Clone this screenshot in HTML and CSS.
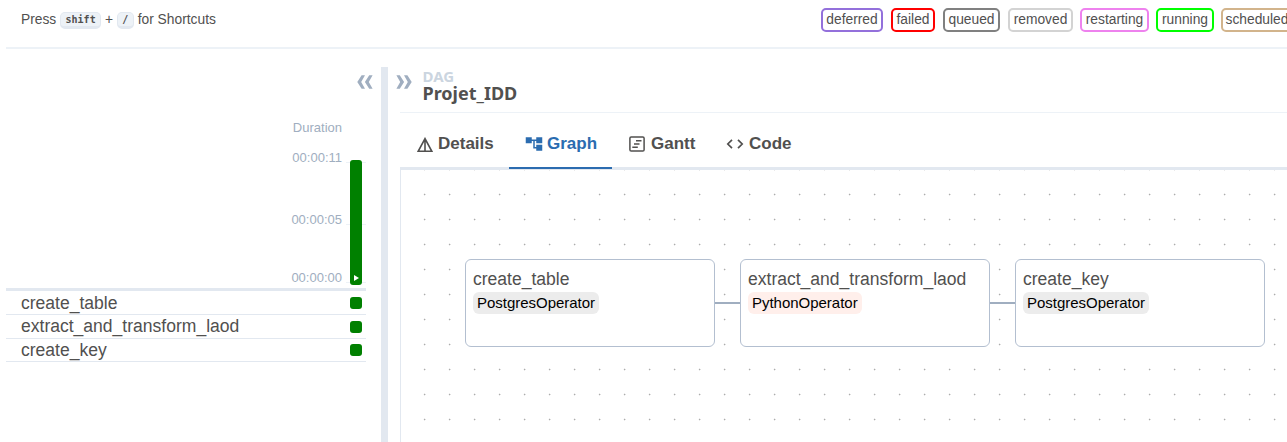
FILE: index.html
```html
<!DOCTYPE html>
<html lang="en">
<head>
<meta charset="utf-8">
<title>Projet_IDD</title>
<link rel="stylesheet" href="styles.css">
</head>
<body>
<header class="topbar">
  <div class="shortcuts">Press <kbd class="key-shift">shift</kbd> + <kbd class="key-slash">/</kbd> for Shortcuts</div>
  <div class="legend">
    <span class="chip deferred">deferred</span>
    <span class="chip failed">failed</span>
    <span class="chip queued">queued</span>
    <span class="chip removed">removed</span>
    <span class="chip restarting">restarting</span>
    <span class="chip running">running</span>
    <span class="chip scheduled">scheduled</span>
  </div>
</header>
<main class="main">
  <section class="grid">
    <div class="collapse">
      <svg width="16" height="14" viewBox="0 0 16 14"><path d="M8 .3H4.6L.3 7l4.3 6.7H8L4.2 7zM15.6.3h-3.4L7.9 7l4.3 6.7h3.4L11.8 7z"/></svg>
    </div>
    <div class="chart">
      <div class="axis">
        <span class="duration">Duration</span>
        <span class="tick-top">00:00:11</span>
        <span class="tick-mid">00:00:05</span>
        <span class="tick-low">00:00:00</span>
      </div>
      <div class="plot">
        <div class="bar"><svg width="5" height="6" viewBox="0 0 5 6"><path d="M0 0l5 3-5 3z"/></svg></div>
      </div>
    </div>
    <div class="task first"><span>create_table</span><i class="state"></i></div>
    <div class="task second"><span>extract_and_transform_laod</span><i class="state"></i></div>
    <div class="task third"><span>create_key</span><i class="state"></i></div>
  </section>
  <div class="divider"></div>
  <section class="details">
    <div class="heading">
      <svg class="expand" width="16" height="14" viewBox="0 0 16 14"><path d="M.4.3h3.4L8.1 7l-4.3 6.7H.4L4.2 7zM8 .3h3.4L15.7 7l-4.3 6.7H8L11.8 7z"/></svg>
      <div class="title"><span class="kind">DAG</span><span class="name">Projet_IDD</span></div>
    </div>
    <nav class="tabs">
      <div class="tab tab-details">
        <svg width="16" height="16" viewBox="0 0 16 16" fill="none" stroke="currentColor" stroke-width="1.6"><path d="M8 1.6L1.2 14.3h13.6zM8 2v12"/></svg>Details
      </div>
      <div class="tab tab-graph active">
        <svg width="18" height="18" viewBox="0 0 24 24" fill="currentColor"><path d="M23 11V3h-8v3H9V3H1v8h8V8h2v10h4v3h8v-8h-8v3h-2V8h2v3z"/></svg>Graph
      </div>
      <div class="tab tab-gantt">
        <svg width="16" height="16" viewBox="0 0 16 16" fill="none" stroke="currentColor" stroke-width="1.5"><rect x=".9" y=".9" width="14.2" height="14.2" rx="1.3"/><path d="M7 4.8h5.5M5 8h5.5M3.3 11.3h5.5"/></svg>Gantt
      </div>
      <div class="tab tab-code">
        <svg width="18" height="10" viewBox="0 0 18 10" fill="none" stroke="currentColor" stroke-width="1.7"><path d="M6 .8L1.8 5 6 9.2M12 .8L16.2 5 12 9.2"/></svg>Code
      </div>
    </nav>
    <div class="canvas">
      <div class="flow">
        <div class="node"><span class="node-name">create_table</span><span class="operator">PostgresOperator</span></div>
        <div class="edge"></div>
        <div class="node"><span class="node-name">extract_and_transform_laod</span><span class="operator python">PythonOperator</span></div>
        <div class="edge"></div>
        <div class="node"><span class="node-name">create_key</span><span class="operator">PostgresOperator</span></div>
      </div>
    </div>
  </section>
</main>
</body>
</html>
```
FILE: styles.css
```css
* { box-sizing: border-box; }
body {
  margin: 0;
  height: 442px;
  overflow: hidden;
  background: #fff;
  color: #51504f;
  font-family: "Liberation Sans", Arial, sans-serif;
}
svg { display: block; flex: none; }

.topbar {
  display: flex;
  height: 49px;
  margin-left: 6px;
  padding: 8px 0 0 15px;
  border-bottom: 2px solid #edf2f7;
}
.shortcuts {
  width: 800px;
  flex: none;
  font-size: 13.8px;
  line-height: 24px;
  white-space: nowrap;
}
kbd {
  display: inline-block;
  height: 17px;
  border: 1px solid #e2e8f0;
  border-bottom-width: 3px;
  border-radius: 5px;
  background: #edf2f7;
  font: bold 10px/13px "DejaVu Sans Mono", monospace;
  text-align: center;
  vertical-align: 1px;
}
.key-shift { width: 41px; }
.key-slash { width: 17px; }
.legend { display: flex; gap: 8px; flex: none; }
.chip {
  height: 24px;
  flex: none;
  border: 2px solid;
  border-radius: 5px;
  font-size: 13.8px;
  line-height: 19px;
  text-align: center;
}
.deferred { width: 62px; border-color: mediumpurple; }
.failed { width: 44px; border-color: red; }
.queued { width: 57px; border-color: gray; }
.removed { width: 65px; border-color: lightgray; }
.restarting { width: 69px; border-color: violet; margin-left: -1px; }
.running { width: 58px; border-color: lime; margin-left: -1px; }
.scheduled { width: 72px; border-color: tan; margin-left: -1px; }

.main { display: flex; height: 393px; padding: 18px 0 0 6px; }
.grid { width: 360px; flex: none; }
.collapse { display: flex; justify-content: flex-end; height: 53px; padding-top: 8px; margin-right: -7px; }
.collapse svg, .expand { fill: #a0aec0; }
.chart { display: flex; height: 171px; border-bottom: 3px solid #e2e8f0; }
.axis {
  display: flex;
  flex-direction: column;
  width: 336px;
  color: #a0aec0;
  font-size: 13px;
  line-height: 16px;
  text-align: right;
}
.tick-top { margin-top: 14px; }
.tick-mid { margin-top: 46px; }
.tick-low { margin-top: 42px; }
.plot {
  width: 20px;
  height: 168px;
  margin-left: 4px;
  padding: 40px 4px 0;
  background:
    linear-gradient(#edf2f7, #edf2f7) 0 42px / 100% 1px no-repeat,
    linear-gradient(#edf2f7, #edf2f7) 0 104px / 100% 1px no-repeat,
    linear-gradient(#edf2f7, #edf2f7) 0 162px / 100% 1px no-repeat;
}
.bar {
  display: flex;
  align-items: flex-end;
  width: 12px;
  height: 125px;
  padding: 0 0 4px 4px;
  border-radius: 3px;
  background: green;
}
.bar svg { fill: #fff; }
.task {
  display: flex;
  justify-content: space-between;
  align-items: center;
  padding: 0 4px 0 15px;
  border-bottom: 1px solid #e2e8f0;
  font-size: 17.55px;
  line-height: 22px;
}
.first { height: 24px; }
.second { height: 24px; }
.second span { padding-bottom: 1px; }
.third { height: 23px; }
.state { width: 12px; height: 12px; border-radius: 3px; background: green; }

.divider { width: 7px; flex: none; margin-left: 15px; background: #e2e8f0; }
.details { display: flex; flex-direction: column; flex: 1; min-width: 0; margin-left: 12px; }
.heading { display: flex; height: 46px; border-bottom: 1px solid #edf2f7; }
.expand { margin: 8px 0 0 -4px; }
.title {
  display: flex;
  flex-direction: column;
  padding: 1px 0 0 10.5px;
  font-family: "Noto Sans", sans-serif;
  font-weight: bold;
}
.kind { color: #cbd5e0; font-size: 15px; line-height: 17px; }
.name { font-size: 18px; line-height: 17px; }
.tabs {
  display: flex;
  height: 57px;
  border-bottom: 3px solid #e2e8f0;
  font-size: 17px;
  font-weight: bold;
}
.tab { display: flex; align-items: center; height: 56px; padding: 6px 0 0 16px; }
.tab svg { margin-right: 5px; }
.tab-details { width: 109px; padding-left: 17px; }
.tab-graph { width: 103px; }
.tab-graph svg { margin-right: 4px; }
.tab-gantt { width: 98px; padding-left: 17px; }
.tab-gantt svg { margin-right: 6px; }
.tab-details svg { margin-top: 2px; }
.active { color: #2b6cb0; border-bottom: 2px solid #2b6cb0; padding-top: 8px; }
.canvas {
  flex: 1;
  padding: 89px 0 0 64px;
  border-left: 1px solid #e2e8f0;
  background: radial-gradient(circle at 12.6px 12.5px, #aaa 0, #b4b4b4 .5px, transparent 1.2px) 11px 12px / 25px 25px;
}
.flow { display: flex; align-items: center; }
.node {
  display: flex;
  flex-direction: column;
  align-items: flex-start;
  width: 250px;
  height: 88px;
  flex: none;
  padding: 9px 7px;
  border: 1px solid #b3bfd0;
  border-radius: 6px;
  background: #fff;
}
.node-name { font-size: 17.55px; line-height: 21px; }
.operator {
  height: 22px;
  margin-top: 2px;
  padding: 0 4px;
  border-radius: 6px;
  background: #ececec;
  color: #000;
  font-size: 15px;
  letter-spacing: -.02px;
  line-height: 22px;
}
.python { background: #ffefeb; }
.edge { width: 25px; height: 2px; flex: none; background: #a0aec0; }
```
